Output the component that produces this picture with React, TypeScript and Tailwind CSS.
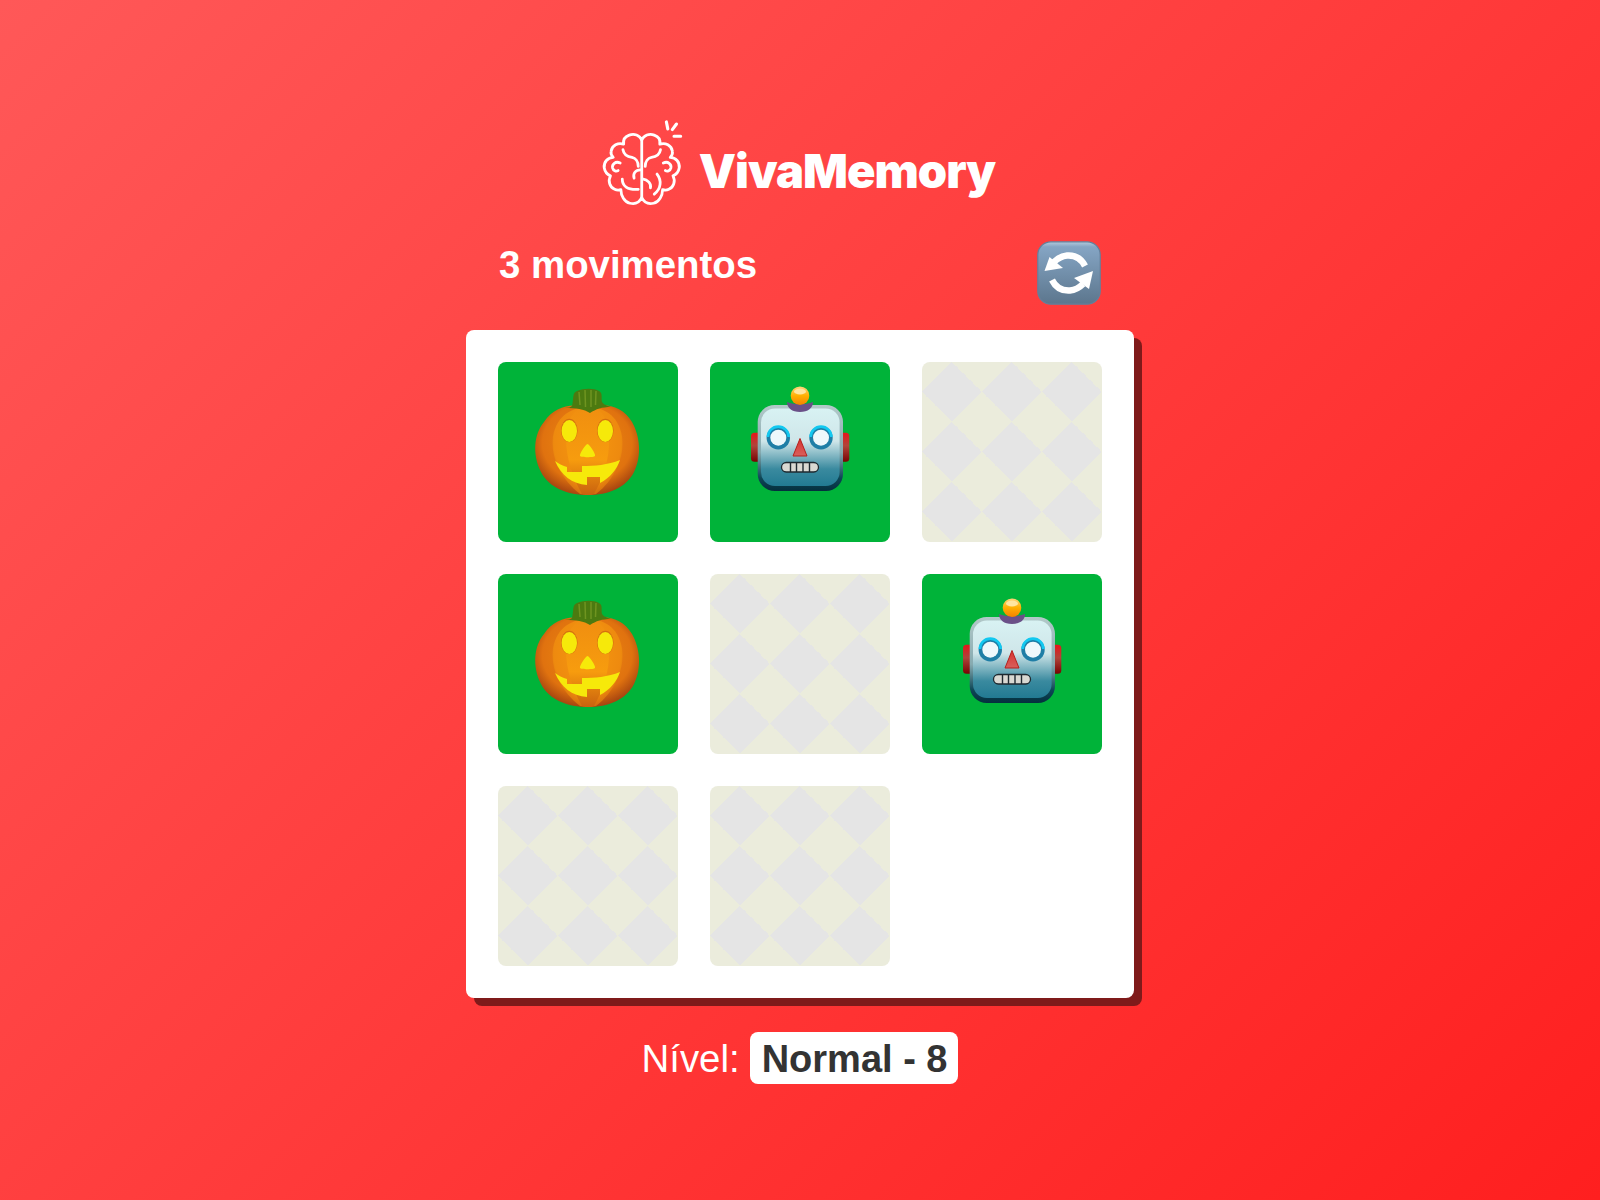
const Brain = () => (
  <svg viewBox="0 0 270 285" className="w-[94px] h-[99px] shrink-0 mt-[2px]" fill="none" stroke="white" strokeWidth="8" strokeLinecap="round" strokeLinejoin="round">
    {/* rays */}
    <path d="M211 20 L215 40 M240 26 L228 42 M233 61 L252 61" strokeWidth="9" />
    {/* outline */}
    <path d="M140 72 C134 58 118 52 104 58 C92 62 86 72 88 84 C72 78 54 88 52 104 C50 112 54 118 58 122 C42 122 30 136 32 152 C34 164 42 172 50 175 C42 190 48 208 62 214 C68 217 74 217 80 215 C80 232 90 250 106 254 C122 258 134 250 140 238 C146 250 158 258 174 254 C190 250 200 232 200 215 C206 217 212 217 218 214 C232 208 238 190 230 175 C238 172 246 164 248 152 C250 136 238 122 222 122 C226 118 230 112 228 104 C226 88 208 78 192 84 C194 72 188 62 176 58 C162 52 146 58 140 72 Z" />
    <path d="M140 72 L140 238" />
    {/* folds */}
    <path d="M86 100 C88 112 98 120 112 122 C122 124 130 134 130 148" />
    <path d="M194 100 C192 112 182 120 168 122 C158 124 150 134 150 148" />
    <path d="M78 138 C64 132 54 142 56 152 C58 160 66 164 72 160" />
    <path d="M202 138 C216 132 226 142 224 152 C222 160 214 164 208 160" />
    <path d="M84 185 C84 204 98 216 130 214" />
    <path d="M136 158 C122 158 114 168 118 182" />
    <path d="M142 184 C158 186 168 198 165 210" />
    <path d="M184 170 C198 188 196 212 176 228" />
  </svg>
);

const Pumpkin = () => (
  <svg viewBox="-12 2 140 140" className="w-[140px] h-[140px]">
    <defs>
      <radialGradient id="pk" cx="50%" cy="42%" r="60%">
        <stop offset="0%" stopColor="#ee8c10" />
        <stop offset="72%" stopColor="#e0720f" />
        <stop offset="100%" stopColor="#a04010" />
      </radialGradient>
      <radialGradient id="pk2" cx="50%" cy="40%" r="64%">
        <stop offset="0%" stopColor="#f6990f" />
        <stop offset="75%" stopColor="#ee8a0f" />
        <stop offset="100%" stopColor="#c9620f" />
      </radialGradient>
      <linearGradient id="pk3" x1="0" y1="0" x2="0" y2="1">
        <stop offset="0%" stopColor="#f08e10" />
        <stop offset="60%" stopColor="#f79c0e" />
        <stop offset="100%" stopColor="#c9620f" />
      </linearGradient>
    </defs>
    <path d="M58 29 C70 22 92 24 102 42 C110 56 112 76 104 92 C96 108 78 115 58 115 C38 115 19 108 11 92 C2 74 4 54 14 42 C25 25 46 22 58 29 Z" fill="url(#pk)" />
    <path d="M58 27 C72 27 88 34 92 56 C95 78 84 100 66 114 C62 115 54 115 50 114 C32 100 20 78 23 56 C27 34 44 27 58 27 Z" fill="url(#pk2)" />
    <path d="M58 27 C68 27 78 34 79 58 C80 80 72 100 64 114 C60 115 56 115 52 114 C44 100 36 80 36 58 C37 34 48 27 58 27 Z" fill="url(#pk3)" />
    <path d="M42 26 C44 18 42 13 47 11 C54 8 64 8 69 11 C73 13 71 18 72 22 C74 25 78 26 81 27 C72 27 66 29 60 33 C54 29 46 28 35 28 C38 28 41 27 42 26 Z" fill="#4c7a10" />
    <path d="M49 12 L50 25 M55 10 L55.5 27 M61 10 L61 27 M66 11 L65.5 25" stroke="#6f9420" strokeWidth="1.5" fill="none" />
    <ellipse cx="39.3" cy="50.4" rx="8.3" ry="11.7" fill="#d4700e" />
    <ellipse cx="75.3" cy="50.4" rx="8.3" ry="11.7" fill="#d4700e" />
    <ellipse cx="39.3" cy="51" rx="7.7" ry="11" fill="#f6e90a" />
    <ellipse cx="75.3" cy="51" rx="7.7" ry="11" fill="#f6e90a" />
    <path d="M57.5 64 C59.5 64 66 74.5 65 76 C64 77.6 51 77.6 50 76 C49 74.5 55.5 64 57.5 64 Z" fill="#f6e90a" />
    <path d="M25 81 C29 84 33 86 37 87 L37 92 L52 92 L52 86 C64 86 78 85 90 80 C87 89 80 98 70 103 L70 97 L57 97 L57 105 C42 104 31 95 25 81 Z" fill="#f6e90a" />
  </svg>
);

const Robot = () => (
  <svg viewBox="-10 2 140 140" className="w-[140px] h-[140px]">
    <defs>
      <linearGradient id="rb" x1="0" y1="0" x2="0" y2="1">
        <stop offset="0%" stopColor="#d8f2f3" />
        <stop offset="42%" stopColor="#cfe6e9" />
        <stop offset="78%" stopColor="#3a8a9f" />
        <stop offset="100%" stopColor="#227a92" />
      </linearGradient>
      <linearGradient id="rbe" x1="0" y1="0" x2="0" y2="1">
        <stop offset="0%" stopColor="#b3c9c9" />
        <stop offset="55%" stopColor="#86aab0" />
        <stop offset="85%" stopColor="#0d4656" />
        <stop offset="100%" stopColor="#052f3e" />
      </linearGradient>
      <linearGradient id="ear" x1="0" y1="0" x2="0" y2="1">
        <stop offset="0%" stopColor="#e8141a" />
        <stop offset="45%" stopColor="#b0443a" />
        <stop offset="100%" stopColor="#780303" />
      </linearGradient>
      <linearGradient id="ball" x1="0" y1="0" x2="0" y2="1">
        <stop offset="0%" stopColor="#ffd680" />
        <stop offset="50%" stopColor="#ffb000" />
        <stop offset="100%" stopColor="#f58200" />
      </linearGradient>
      <linearGradient id="nose" x1="0" y1="0" x2="0" y2="1">
        <stop offset="0%" stopColor="#d8322e" />
        <stop offset="100%" stopColor="#d8605c" />
      </linearGradient>
    </defs>
    <rect x="11" y="52.7" width="12" height="29" rx="3.5" fill="url(#ear)" />
    <rect x="97" y="52.7" width="12.3" height="29" rx="3.5" fill="url(#ear)" />
    <rect x="17.7" y="25" width="85.3" height="86" rx="17" fill="url(#rbe)" />
    <rect x="21" y="28.5" width="78.6" height="77.5" rx="14" fill="url(#rb)" />
    <path d="M47 22 C55 25 65 25 73 22 C73 28 68 32 60 32 C52 32 47 28 47 22 Z" fill="#6a5088" />
    <circle cx="60" cy="15.7" r="9.3" fill="url(#ball)" />
    <ellipse cx="60" cy="11.5" rx="6" ry="3" fill="#ffe6a0" />
    {[38.3, 81].map((cx) => (
      <g key={cx}>
        <circle cx={cx} cy="57.7" r="11.7" fill="#1f7ea6" />
        <path d={`M${cx - 10.4} 57 A10.4 10.4 0 0 1 ${cx + 10.4} 57`} fill="none" stroke="#12c8f0" strokeWidth="2.6" />
        <circle cx={cx} cy="57.7" r="8" fill="#eef8fb" />
      </g>
    ))}
    <path d="M60 58.5 L67 76 L53 76 Z" fill="url(#nose)" stroke="#b5201c" strokeWidth="1" strokeLinejoin="round" />
    <rect x="41.5" y="82.5" width="37" height="9.5" rx="4.75" fill="#d9d9d2" stroke="#1f2a30" strokeWidth="1.3" />
    <path d="M50.5 82.5 V92 M56.5 82.5 V92 M63 82.5 V92 M69.5 82.5 V92" stroke="#1f2a30" strokeWidth="1.4" />
  </svg>
);

const Refresh = () => (
  <svg viewBox="0 0 64 64" className="w-16 h-16">
    <defs>
      <linearGradient id="rf" x1="0" y1="0" x2="0" y2="1">
        <stop offset="0%" stopColor="#b6cbdd" />
        <stop offset="8%" stopColor="#85a5c4" />
        <stop offset="100%" stopColor="#5c768d" />
      </linearGradient>
    </defs>
    <rect x="0.8" y="0.8" width="62.4" height="62.4" rx="13" fill="url(#rf)" stroke="#63809c" strokeWidth="1.2" />
    <g fill="none" stroke="white" strokeWidth="6.5" strokeLinecap="butt">
      <path d="M48 25 C44 17 37 14 30 14.5 C24 15 20 18 17 21" />
      <path d="M15 39 C19 47 26 50 33 49.5 C39 49 43 46 46 43" />
    </g>
    <path d="M7.5 30 L12.5 16 L26 27 Z" fill="white" />
    <path d="M56 30 L52 48 L37 37 Z" fill="white" />
  </svg>
);

type CardProps = { face?: "pumpkin" | "robot" };

const Card = ({ face }: CardProps) => {
  if (face) {
    return (
      <div className="w-[180px] h-[180px] rounded-lg bg-[#00b339] flex items-center justify-center">
        {face === "pumpkin" ? <Pumpkin /> : <Robot />}
      </div>
    );
  }
  return (
    <div className="w-[180px] h-[180px] rounded-lg bg-[#e5e5e5] bg-[linear-gradient(45deg,#ebecdc_25%,transparent_25%),linear-gradient(135deg,#ebecdc_25%,transparent_25%),linear-gradient(225deg,#ebecdc_25%,transparent_25%),linear-gradient(315deg,#ebecdc_25%,transparent_25%)] bg-[size:60px_60px]" />
  );
};

const cards: CardProps["face"][] = ["pumpkin", "robot", undefined, "pumpkin", undefined, "robot", undefined, undefined];

export default function App() {
  return (
    <div className="min-h-[1200px] flex flex-col items-center pt-[114px] bg-[linear-gradient(135deg,#ff5858,#ff1f1f)] font-['Liberation_Sans',sans-serif] text-white">
      <div className="flex items-center gap-3 h-[99px] ml-[-12px]">
        <Brain />
        <h1 className="font-['Inter',sans-serif] font-black text-[47px] tracking-[-1px] leading-none mt-[13px]">VivaMemory</h1>
      </div>

      <div className="w-[668px] h-[63px] mt-[29px] mb-[25px] px-[33px] flex justify-between items-start">
        <span className="font-bold text-[38.4px] leading-[44px] mt-px">3 movimentos</span>
        <button className="w-16 h-16 -mt-px">
          <Refresh />
        </button>
      </div>

      <div className="w-[668px] h-[668px] p-8 bg-white rounded-lg shadow-[8px_8px_0_#7f1a1a] grid grid-cols-3 gap-8 content-start">
        {cards.map((face, i) => (
          <Card key={i} face={face} />
        ))}
      </div>

      <div className="mt-[34px] flex items-center gap-[10px] leading-none">
        <span className="text-[38.4px] pt-[2px]">Nível:</span>
        <span className="h-[52px] pl-3 pr-[11px] pt-[2px] flex items-center rounded-lg bg-white font-bold text-[38px] text-[#333333]">Normal - 8</span>
      </div>
    </div>
  );
}
